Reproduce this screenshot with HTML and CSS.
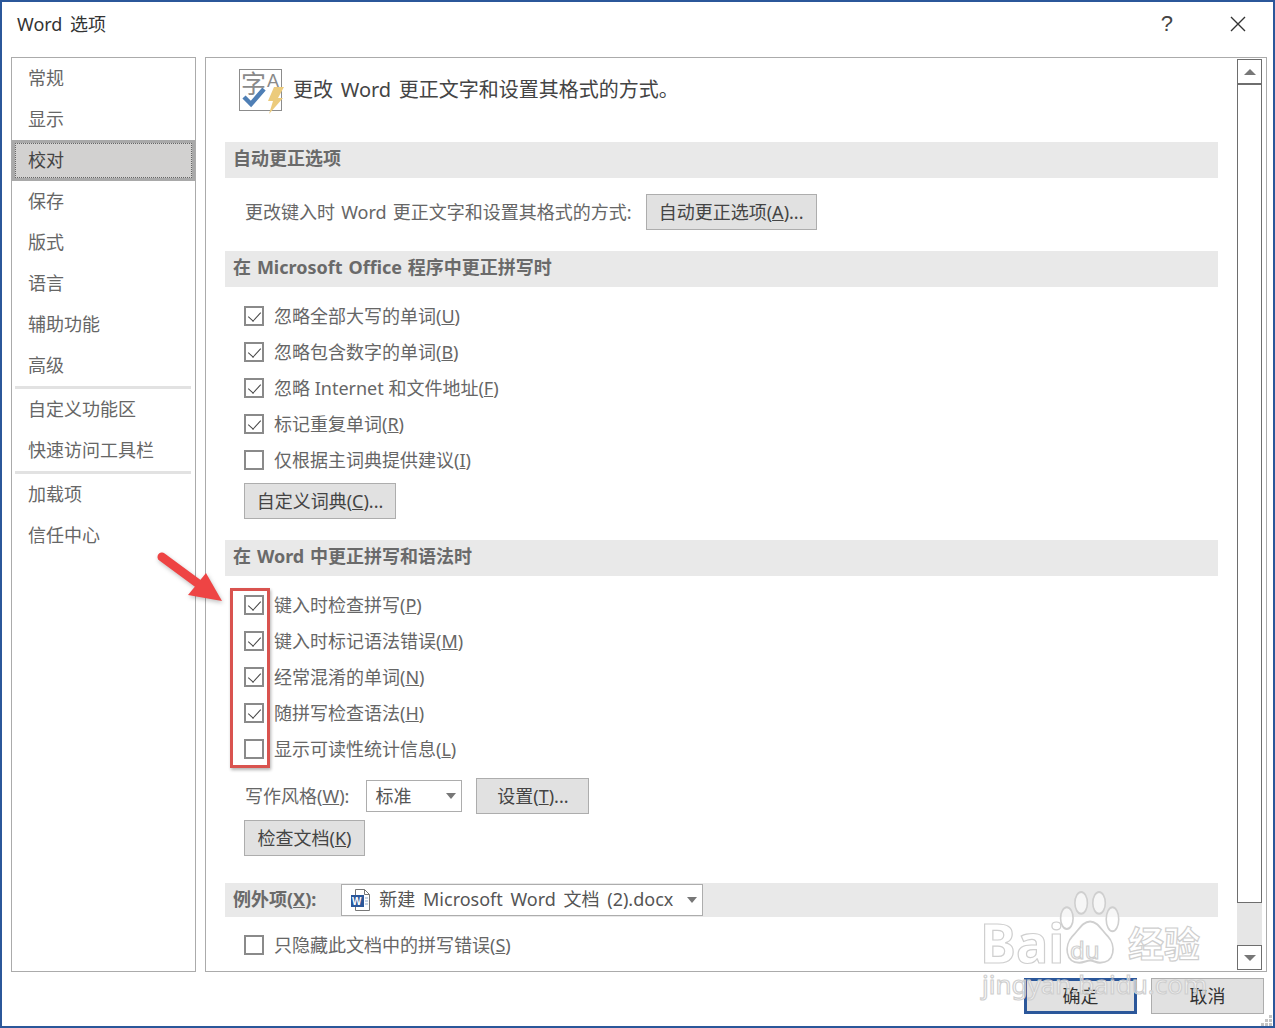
FILE: index.html
```html
<!DOCTYPE html>
<html lang="zh">
<head>
<meta charset="utf-8">
<title>Word 选项</title>
<link rel="stylesheet" href="styles.css">
</head>
<body>
<div class="dialog">
  <header class="titlebar">
    <span class="title">Word 选项</span>
    <span class="help">?</span>
    <svg class="close" width="16" height="16" viewBox="0 0 16 16"><path d="M1 1L15 15M15 1L1 15" stroke="#333" stroke-width="1.4" fill="none"/></svg>
  </header>
  <div class="body">
    <nav class="side">
      <div class="nav">常规</div>
      <div class="nav">显示</div>
      <div class="nav active"><span>校对</span></div>
      <div class="nav">保存</div>
      <div class="nav">版式</div>
      <div class="nav">语言</div>
      <div class="nav">辅助功能</div>
      <div class="nav">高级</div>
      <div class="sep"></div>
      <div class="nav">自定义功能区</div>
      <div class="nav">快速访问工具栏</div>
      <div class="sep"></div>
      <div class="nav">加载项</div>
      <div class="nav">信任中心</div>
    </nav>
    <main class="panel">
      <div class="content">
        <div class="intro">
          <svg class="intro-icon" width="48" height="50" viewBox="0 0 48 50">
            <rect x="1.500" y="1.500" width="42" height="41" fill="#fff" stroke="#8c8c8c"/>
            <text x="3" y="25" class="ic-zi">字</text>
            <text x="29" y="19" class="ic-a">A</text>
            <path d="M6 29l7 7L26 21" fill="none" stroke="#4f7fb5" stroke-width="4.5"/>
            <path d="M36 19h10l-6 11h5L31 46l4-13h-5z" fill="#eccb7c"/>
          </svg>
          <span class="intro-text">更改 Word 更正文字和设置其格式的方式。</span>
        </div>
        <div class="section">自动更正选项</div>
        <div class="line line-auto">
          <span class="label label-auto">更改键入时 Word 更正文字和设置其格式的方式:</span>
          <button class="btn btn-auto">自动更正选项(<u>A</u>)...</button>
        </div>
        <div class="section sec-gap">在 Microsoft Office 程序中更正拼写时</div>
        <div class="checks">
          <label class="row"><span class="box on"></span>忽略全部大写的单词(<u>U</u>)</label>
          <label class="row"><span class="box on"></span>忽略包含数字的单词(<u>B</u>)</label>
          <label class="row"><span class="box on"></span>忽略 Internet 和文件地址(<u>F</u>)</label>
          <label class="row"><span class="box on"></span>标记重复单词(<u>R</u>)</label>
          <label class="row"><span class="box"></span>仅根据主词典提供建议(<u>I</u>)</label>
        </div>
        <button class="btn btn-dict">自定义词典(<u>C</u>)...</button>
        <div class="section sec-gap">在 Word 中更正拼写和语法时</div>
        <div class="checks">
          <label class="row"><span class="box on"></span>键入时检查拼写(<u>P</u>)</label>
          <label class="row"><span class="box on"></span>键入时标记语法错误(<u>M</u>)</label>
          <label class="row"><span class="box on"></span>经常混淆的单词(<u>N</u>)</label>
          <label class="row"><span class="box on"></span>随拼写检查语法(<u>H</u>)</label>
          <label class="row"><span class="box"></span>显示可读性统计信息(<u>L</u>)</label>
        </div>
        <div class="line line-style">
          <span class="label">写作风格(<u>W</u>):</span>
          <div class="select sel-style"><span class="sel-text">标准</span><i class="caret"></i></div>
          <button class="btn btn-set">设置(<u>T</u>)...</button>
        </div>
        <button class="btn btn-check">检查文档(<u>K</u>)</button>
        <div class="section sec-except">
          <span class="sel-text">例外项(<u>X</u>):</span>
          <div class="select sel-doc">
            <svg class="docicon" width="22" height="24" viewBox="0 0 22 24">
              <path d="M5.500 1.500h9l5 5v16h-14z" fill="#fff" stroke="#777"/>
              <path d="M14.500 1.500v5h5" fill="none" stroke="#777"/>
              <rect x="1" y="7" width="13" height="12" fill="#2b579a"/>
              <text x="2" y="16.500" class="ic-w">W</text>
              <path d="M15 10h3M15 13h3M15 16h3" stroke="#8fa9cc"/>
            </svg>
            <span class="sel-text">新建 Microsoft Word 文档 (2).docx</span><i class="caret"></i>
          </div>
        </div>
        <label class="row row-last"><span class="box"></span>只隐藏此文档中的拼写错误(<u>S</u>)</label>
      </div>
      <div class="scrollbar">
        <div class="sb-btn"><i class="caret up"></i></div>
        <div class="sb-thumb"></div>
        <div class="sb-track"></div>
        <div class="sb-btn"><i class="caret"></i></div>
      </div>
    </main>
  </div>
  <footer class="footer">
    <button class="btn btn-foot primary">确定</button>
    <button class="btn btn-foot">取消</button>
    <svg class="grip" width="12" height="12" viewBox="0 0 12 12"><path d="M8 1h3v3H8zM4 5h3v3H4zM8 5h3v3H8zM0 9h3v3H0zM4 9h3v3H4zM8 9h3v3H8z" fill="#c4c4c4"/></svg>
  </footer>

  <div class="redbox"></div>
  <svg class="arrow" width="80" height="66" viewBox="0 0 80 66">
    <path d="M8 8L46 36" stroke="#ee4444" stroke-width="9" stroke-linecap="round" fill="none"/>
    <path d="M68 52L34 46 52 24z" fill="#ee4444"/>
  </svg>

  <div class="watermark">
    <svg class="paw" width="68" height="76" viewBox="0 0 76 70" preserveAspectRatio="none">
      <g fill="rgba(255,255,255,.6)" stroke="#cfcfcf" stroke-width="1.800">
        <ellipse cx="27" cy="11" rx="7" ry="10"/>
        <ellipse cx="47" cy="11" rx="7" ry="10"/>
        <ellipse cx="11" cy="25" rx="7" ry="10"/>
        <ellipse cx="62" cy="26" rx="7" ry="11"/>
        <path d="M37 28c8 0 12 7 20 14 9 8 8 24-9 24-5 0-7-2-11-2s-7 2-12 2C9 66 8 50 17 42c8-7 12-14 20-14z"/>
      </g>
    </svg>
    <span class="wm wm-bai">Bai</span>
    <span class="wm wm-du">du</span>
    <span class="wm wm-jy">经验</span>
    <span class="wm wm-url">jingyan.baidu.com</span>
  </div>
</div>
</body>
</html>
```

FILE: styles.css
```css
* { box-sizing: border-box; }
html, body { margin: 0; padding: 0; }
body {
  width: 1275px;
  height: 1028px;
  overflow: hidden;
  background: #fff;
  font-family: "Noto Sans", "Noto Sans CJK SC", sans-serif;
  font-size: 18px;
  color: #666;
}
.dialog {
  position: relative;
  width: 1275px;
  height: 1028px;
  border: 2px solid #2b579a;
  background: #fff;
  display: flex;
  flex-direction: column;
}
.titlebar {
  height: 55px;
  flex: none;
  display: flex;
  align-items: flex-start;
  padding: 9px 27px 0 15px;
  color: #333;
}
.title { font-size: 18px; line-height: 26px; flex: 1; word-spacing: 3px; }
.help { font-size: 22px; line-height: 26px; margin-right: 57px; color: #444; font-family: "Liberation Sans", sans-serif; }
.close { margin-top: 5px; }

.body { flex: none; height: 915px; display: flex; gap: 9px; padding: 0 6px 0 9px; }
.side {
  width: 185px;
  flex: none;
  border: 1px solid #ababab;
}
.nav { height: 41px; line-height: 41px; padding-left: 16px; font-size: 18px; color: #666; }
.nav.active {
  background: #d2d1d0;
  border: 3px solid #a9a9a9;
  padding-left: 13px;
  line-height: 35px;
  color: #444;
  outline: 1px dotted #666;
  outline-offset: -4px;
}
.sep { height: 3px; background: #e2e2e2; margin: 0 4px 0 3px; }

.panel {
  flex: 1;
  position: relative;
  border: 1px solid #ababab;
  display: flex;
  justify-content: space-between;
  padding-right: 4px;
}
.content { width: 1012px; padding-left: 19px; }
.intro { height: 84px; display: flex; align-items: flex-start; padding: 10px 0 0 13px; }
.intro-icon { flex: none; margin-right: 7px; overflow: visible; }
.intro-text { font-size: 20px; line-height: 28px; margin-top: 8px; color: #444; word-spacing: 2.5px; }
.ic-zi { font-size: 25px; fill: #8a8a8a; font-family: "Noto Sans CJK SC", sans-serif; }
.ic-a { font-size: 18px; fill: #8a8a8a; font-family: "Liberation Sans", sans-serif; }
.ic-w { font-size: 10px; font-weight: 700; fill: #fff; font-family: "Liberation Sans", sans-serif; }

.section {
  height: 36px;
  background: #e9e9e9;
  padding-left: 8px;
  font-size: 18px;
  font-weight: 700;
  line-height: 33px;
  color: #6a6a6a;
  word-spacing: 1.2px;
}
.sec-gap { margin-top: 21px; }
.line { display: flex; align-items: center; }
.line-auto { margin-top: 16px; padding-left: 20px; }
.label { color: #666; margin-bottom: 2px; }
.label-auto { margin-right: 14px; word-spacing: 1.5px; }

.btn {
  display: block;
  height: 36px;
  padding: 0;
  border: 1px solid #adadad;
  background: #e1e1e1;
  font: inherit;
  font-size: 18px;
  line-height: 32px;
  color: #444;
  text-align: center;
}
.btn-auto { width: 171px; }
.btn-dict { width: 152px; margin: 5px 0 0 19px; }
.btn-set { width: 113px; margin-left: 14px; }
.btn-check { width: 121px; margin: 6px 0 0 19px; }

.checks { margin-top: 11px; }
.row { display: flex; align-items: center; height: 36px; padding-left: 19px; color: #666; line-height: 36px; }
.row-last { margin-top: 10px; }
.box {
  position: relative;
  width: 20px;
  height: 20px;
  flex: none;
  border: 2px solid #8a8a8a;
  margin-right: 10px;
  background: #fff;
}
.box.on::after {
  content: "";
  position: absolute;
  left: 5px;
  top: 1px;
  width: 6px;
  height: 11px;
  border: solid #444;
  border-width: 0 1.500px 1.500px 0;
  transform: rotate(42deg);
}

.line-style { margin-top: 11px; padding-left: 20px; }
.select {
  position: relative;
  display: flex;
  align-items: center;
  height: 32px;
  border: 1px solid #adadad;
  background: #fff;
  color: #555;
}
.sel-text { margin-bottom: 2px; }
.sel-style { width: 96px; margin-left: 17px; padding-left: 8px; }
.sel-doc { width: 362px; padding-left: 8px; font-weight: 400; font-size: 18px; color: #555; word-spacing: 3px; }
.docicon { flex: none; margin-right: 7px; }
.caret {
  position: absolute;
  right: 5px;
  top: 12px;
  width: 0;
  height: 0;
  border: 5.500px solid transparent;
  border-top: 6px solid #777;
  border-bottom: 0;
}
.caret.up { border-top: 0; border-bottom: 6px solid #777; }
.sec-except {
  height: 34px;
  margin-top: 27px;
  display: flex;
  align-items: center;
  line-height: 34px;
}
.sec-except .sel-doc { margin-left: 25px; }

.scrollbar {
  width: 25px;
  margin-top: 1px;
  margin-bottom: 1px;
  display: flex;
  flex-direction: column;
  background: #e6e6e6;
}
.sb-btn {
  position: relative;
  width: 25px;
  height: 25px;
  flex: none;
  border: 1px solid #6e6e6e;
  background: #fff;
}
.sb-btn .caret { left: 6px; top: 9px; right: auto; border-left-width: 6px; border-right-width: 6px; }
.sb-thumb { height: 819px; flex: none; background: #fff; border: 1px solid #6e6e6e; }
.sb-track { flex: 1; }

.footer {
  flex: 1;
  position: relative;
  display: flex;
  justify-content: flex-end;
  gap: 14px;
  padding: 6px 9px 0 0;
}
.btn-foot { width: 113px; height: 36px; line-height: 33px; color: #333; }
.primary { border: 3px solid #2b579a; line-height: 29px; }
.grip { position: absolute; right: 0; bottom: 0; }

.redbox {
  position: absolute;
  left: 228px;
  top: 586px;
  width: 40px;
  height: 180px;
  border: 3px solid #d9534f;
  box-shadow: 1px 2px 3px rgba(0,0,0,.3);
}
.arrow { position: absolute; left: 152px; top: 547px; filter: drop-shadow(1px 2px 2px rgba(0,0,0,.25)); }

.watermark { position: absolute; left: 960px; top: 880px; width: 300px; height: 130px; pointer-events: none; }
.paw { position: absolute; left: 95px; top: 9px; }
.wm {
  position: absolute;
  color: rgba(255,255,255,.6);
  -webkit-text-stroke: 1.200px #cfcfcf;
  font-family: "Noto Sans", "Noto Sans CJK SC", sans-serif;
  white-space: nowrap;
}
.wm-bai { left: 18px; top: 30px; font-size: 54px; font-weight: 700; line-height: 60px; }
.wm-du { left: 108px; top: 50px; font-size: 24px; line-height: 36px; }
.wm-jy { left: 166px; top: 36px; font-size: 36px; font-weight: 700; line-height: 54px; }
.wm-url { left: 20px; top: 84px; font-size: 26px; line-height: 36px; }
```
